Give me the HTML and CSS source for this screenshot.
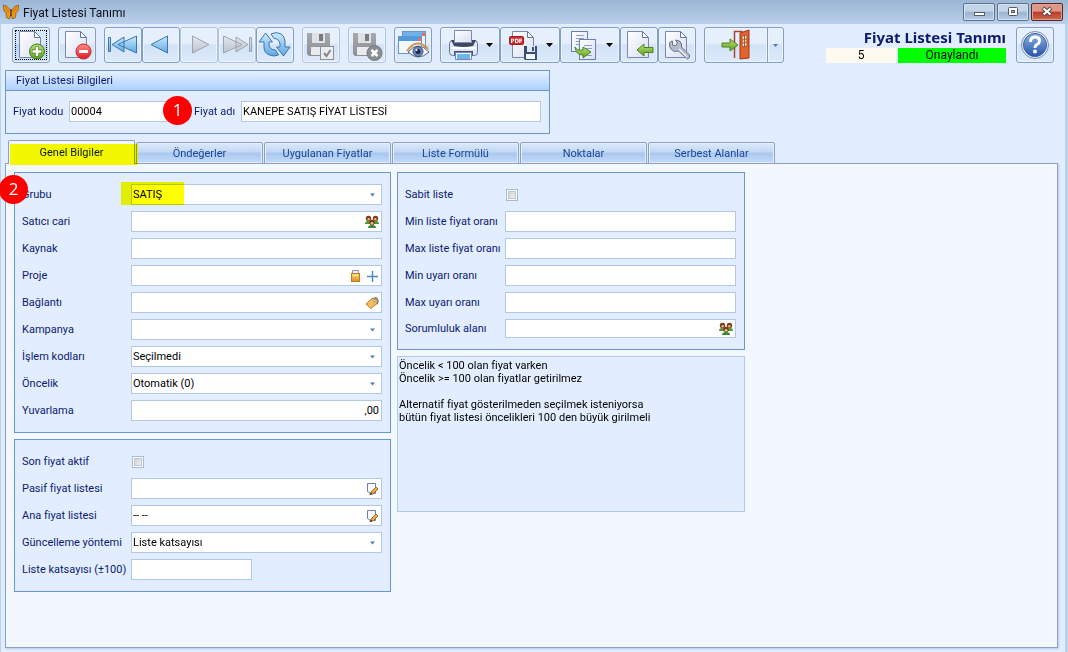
FILE: index.html
```html
<!DOCTYPE html>
<html lang="tr">
<head>
<meta charset="utf-8">
<title>Fiyat Listesi Tanımı</title>
<link rel="stylesheet" href="styles.css">
</head>
<body>
<svg class="defs" aria-hidden="true">
  <defs>
    <linearGradient id="gPage" x1="0" y1="0" x2="1" y2="1"><stop offset="0" stop-color="#fff"/><stop offset="1" stop-color="#d9dff2"/></linearGradient>
    <linearGradient id="gBlue" x1="0" y1="0" x2="0" y2="1"><stop offset="0" stop-color="#cdeafd"/><stop offset="1" stop-color="#5fa9e0"/></linearGradient>
    <linearGradient id="gGray" x1="0" y1="0" x2="0" y2="1"><stop offset="0" stop-color="#e6e9ee"/><stop offset="1" stop-color="#bcc2ca"/></linearGradient>
    <linearGradient id="gDisk" x1="0" y1="0" x2="0" y2="1"><stop offset="0" stop-color="#a6a9ad"/><stop offset="1" stop-color="#8b8f94"/></linearGradient>
    <linearGradient id="gGreen" x1="0" y1="0" x2="0" y2="1"><stop offset="0" stop-color="#b9e07a"/><stop offset="1" stop-color="#5fa01e"/></linearGradient>
    <linearGradient id="gRed" x1="0" y1="0" x2="0" y2="1"><stop offset="0" stop-color="#ff8d86"/><stop offset="1" stop-color="#dd1a22"/></linearGradient>
    <linearGradient id="gHelp" x1="0" y1="0" x2="0" y2="1"><stop offset="0" stop-color="#8db2e6"/><stop offset="1" stop-color="#2754a8"/></linearGradient>
    <linearGradient id="gGold" x1="0" y1="0" x2="0" y2="1"><stop offset="0" stop-color="#fbd679"/><stop offset="1" stop-color="#dd8f1e"/></linearGradient>
    <symbol id="people" viewBox="0 0 14 14">
      <path d="M0 9q0-3 3-3t3 3zM8 9q0-3 3-3t3 3z" fill="#4c9a3a"/>
      <circle cx="3.500" cy="3.500" r="2.700" fill="#7a3f1a"/><circle cx="10.500" cy="3.500" r="2.700" fill="#7a3f1a"/>
      <circle cx="3.700" cy="4.200" r="1.300" fill="#e9b27c"/><circle cx="10.300" cy="4.200" r="1.300" fill="#e9b27c"/>
      <path d="M3 13q0-3 4-3t4 3z" fill="#3c8a2d"/><circle cx="7" cy="7.500" r="2.700" fill="#6c3412"/><circle cx="7" cy="8.300" r="1.500" fill="#eab881"/>
    </symbol>
    <symbol id="lock" viewBox="0 0 14 14"><path d="M4.500 5V1.500h6V5" fill="#eef1f8" stroke="#8b94ab"/><rect x="3.500" y="4.500" width="8" height="8" fill="url(#gGold)" stroke="#c07a24"/><path d="M5 6.500h5" stroke="#fff1b0"/></symbol>
    <symbol id="plus" viewBox="0 0 14 14"><path d="M7.500 2v11M2 7.500h11" stroke="#4a86c0" stroke-width="1.400"/></symbol>
    <symbol id="tag" viewBox="0 0 14 14"><path d="M1 8l6-5.500 4-.5 1.500 2.500-.7 3L6 12.500z" fill="#f5bf5e" stroke="#b8752a"/><circle cx="9.700" cy="4.700" r="1.200" fill="#fff" stroke="#555" stroke-width=".6"/><path d="M9.500 2q3-1 3.500 2t-1 4.500" fill="none" stroke="#666"/></symbol>
    <symbol id="edit" viewBox="0 0 14 14"><path d="M2.500 1.500h8v10h-5l-3-2z" fill="#f8faff" stroke="#6d7fa8"/><path d="M5 12.500l1-2.500 5-5 2 2-5 5z" fill="#f0a83c" stroke="#8c5a20" stroke-width=".8"/><path d="M4.500 13l1.500-2.500 1.500 1.500z" fill="#333"/></symbol>
    <symbol id="arrow" viewBox="0 0 7 4"><path d="M0 0h7L3.500 4z" fill="currentColor"/></symbol>
    <symbol id="page" viewBox="0 0 32 32"><path d="M4.500 2.500h15l6 6v20h-21z" fill="url(#gPage)" stroke="#7b88ac"/><path d="M19.500 2.500v6h6z" fill="#fff" stroke="#5d76aa"/></symbol>
  </defs>
</svg>

<div class="window">
  <header class="titlebar">
    <svg class="logo" width="16" height="16" viewBox="0 0 16 16" aria-hidden="true">
      <path d="M8 7Q4 1 .5 1q-.5 4 1 6.500L3.500 9 3 10l.5 3.500L6.500 15 8 10l1.500 5 3-1.500.5-3.500-.5-1 2-1.500Q16 5 15.500 1 12 1 8 7z" fill="#ec961c" stroke="#8a4e0e" stroke-width=".7"/>
      <path d="M2.500 2.500Q3 6 6 8M13.500 2.500Q13 6 10 8" fill="none" stroke="#d9780f" stroke-width="1.200"/><path d="M8 5v7" stroke="#4a2808" stroke-width="1.200"/>
    </svg>
    <h1 class="caption">Fiyat Listesi Tanımı</h1>
    <div class="window-buttons">
      <button class="winbtn" aria-label="Simge durumuna küçült"><svg width="12" height="12"><rect x="1.500" y="6.500" width="10" height="3" fill="#fff" stroke="#555b66"/></svg></button>
      <button class="winbtn" aria-label="Ekranı kapla"><svg width="12" height="12"><rect x="1.500" y="1.500" width="9" height="8" rx="1" fill="#fff" stroke="#555b66"/><rect x="4.500" y="4.500" width="3" height="2" fill="#9fb8d6" stroke="#555b66"/></svg></button>
      <button class="winbtn winbtn-close" aria-label="Kapat"><svg width="12" height="12"><path d="M2 2l8 7M10 2L2 9" stroke="#5b4650" stroke-width="4"/><path d="M2.500 2.500l7 6M9.500 2.500l-7 6" stroke="#fff" stroke-width="2"/></svg></button>
    </div>
  </header>

  <div class="toolbar">
    <div class="tools">
      <div class="group">
        <button class="tool tool-focus" aria-label="Yeni"><svg width="32" height="32"><use href="#page"/><circle cx="22" cy="22.500" r="7.500" fill="url(#gGreen)" stroke="#3f7a17"/><path d="M22 17.500v10M17 22.500h10" stroke="#4c821f" stroke-width="4"/><path d="M22 18v9M17.500 22.500h9" stroke="#fff" stroke-width="2.500"/></svg></button>
      </div>
      <div class="group">
        <button class="tool" aria-label="Sil"><svg width="32" height="32"><use href="#page"/><circle cx="22.500" cy="22.500" r="7.500" fill="url(#gRed)" stroke="#c5242a"/><path d="M18 22.500h9" stroke="#fff" stroke-width="3"/></svg></button>
      </div>
      <div class="group">
        <button class="tool" aria-label="İlk"><svg width="32" height="32"><path d="M1.500 8.500h2v14h-2zM17 8v15L5 15.500zM29.500 7v17L11 15.500z" fill="url(#gBlue)" stroke="#3a74b2"/></svg></button>
        <button class="tool" aria-label="Önceki"><svg width="32" height="32"><path d="M22.500 7v17L6 15.500z" fill="url(#gBlue)" stroke="#3a74b2"/></svg></button>
        <button class="tool tool-off" disabled aria-label="Sonraki"><svg width="32" height="32"><path d="M9.500 7v17L26 15.500z" fill="url(#gGray)" stroke="#9ba3ae"/></svg></button>
        <button class="tool tool-off" disabled aria-label="Son"><svg width="32" height="32"><path d="M28.500 8.500h2v14h-2zM15 8v15l12-7.500zM2.500 7v17L21 15.500z" fill="url(#gGray)" stroke="#9ba3ae"/></svg></button>
        <button class="tool" aria-label="Yenile"><svg width="32" height="32"><g fill="url(#gBlue)" stroke="#3a74b2" stroke-linejoin="round"><path d="M5 18v-5H0L6.500 4l7 9H10v3q1 5 6.500 5l3 5q-5 2-9 0Q5 24 5 18z"/><path d="M26 12v6h5l-6.500 9-7-9H21v-3Q20 9.500 15 9.500L12 5q5-2.500 9-.5Q25 6 26 12z"/></g></svg></button>
      </div>
      <div class="group">
        <button class="tool tool-off" disabled aria-label="Kaydet"><svg width="32" height="32"><path d="M2 4h22l1 1v22H4l-2-2z" fill="url(#gDisk)"/><path d="M7 4h13v10H7z" fill="#dfe1e4"/><path d="M14 5h4v7h-4z" fill="#777b80"/><path d="M6 18h15v8H6z" fill="#e9eaec"/><rect x="15.500" y="17.500" width="13" height="13" fill="#eceded" stroke="#8c8f94"/><path d="M19 24l2.500 3 4-6" fill="none" stroke="#85898e" stroke-width="2"/></svg></button>
      </div>
      <div class="group">
        <button class="tool tool-off" disabled aria-label="Kaydı iptal et"><svg width="32" height="32"><path d="M2 4h22l1 1v22H4l-2-2z" fill="url(#gDisk)"/><path d="M7 4h13v10H7z" fill="#dfe1e4"/><path d="M14 5h4v7h-4z" fill="#777b80"/><path d="M6 18h15v8H6z" fill="#e9eaec"/><circle cx="23.500" cy="24" r="7.500" fill="#8b8f94" stroke="#74787d"/><path d="M20.500 21l6 6M26.500 21l-6 6" stroke="#fff" stroke-width="2.500"/></svg></button>
      </div>
      <div class="group">
        <button class="tool" aria-label="Önizleme"><svg width="32" height="32"><rect x="5.500" y="2.500" width="23" height="16" fill="#eef4fc" stroke="#6a95c8"/><path d="M6 3h22v4H6z" fill="#6fb2e8"/><path d="M25 4h3v3h-3z" fill="#ef6a55"/><rect x="1.500" y="7.500" width="23" height="17" fill="#f4f8fe" stroke="#6a95c8"/><path d="M2 8h22v4H2z" fill="#4e9ce0"/><path d="M21 9h3v3h-3z" fill="#ef6a55"/><path d="M11 23q10-12 21 0-11 10-21 0z" fill="#f4f6fa" stroke="#566787"/><path d="M10 22q10-14 21-2" fill="none" stroke="#d39549" stroke-width="2"/><circle cx="21" cy="22.500" r="5" fill="#6c86b4" stroke="#3a4d79"/><circle cx="21" cy="22.500" r="2.500" fill="#1b2747"/><circle cx="19.500" cy="21" r="1" fill="#fff"/></svg></button>
      </div>
      <div class="group">
        <button class="tool tool-drop" aria-label="Yazdır"><svg width="32" height="32"><rect x="1.500" y="11.500" width="28" height="15" rx="3" fill="#dfe6f5" stroke="#66779f"/><path d="M6.500 1.500h17v12h-17z" fill="url(#gPage)" stroke="#7c8ab0"/><path d="M3 11h3v3h18v-3h4l-3 6q-9 2-19 0z" fill="#3d4865"/><path d="M3 19h25" stroke="#fff" stroke-width="2"/><path d="M6 22h19v4H6z" fill="#455173"/><path d="M7.500 23.500h16v7h-16z" fill="#f3f8ff" stroke="#7188b5"/><path d="M9 25h13v5H9z" fill="#70b6ee"/></svg><svg class="caret" width="7" height="4"><use href="#arrow"/></svg></button>
        <button class="tool tool-drop" aria-label="PDF olarak kaydet"><svg width="32" height="32"><use href="#page"/><rect x="1.500" y="7.500" width="14" height="8" rx="1" fill="#d32a2d" stroke="#a41c22"/><text class="pdf" x="8.500" y="14" text-anchor="middle">PDF</text><path d="M16 17h13v14H17l-1-1z" fill="#3c4d72"/><path d="M19 17h8v6h-8z" fill="#dfe7f5"/><path d="M24 18h2v4h-2z" fill="#3c4d72"/><path d="M18 25h9v5h-9z" fill="#f5f8fd"/></svg><svg class="caret" width="7" height="4"><use href="#arrow"/></svg></button>
        <button class="tool tool-drop" aria-label="Kopyala"><svg width="32" height="32"><rect x="3.500" y="2.500" width="16" height="20" fill="url(#gPage)" stroke="#6b7fae"/><path d="M8 6.500h8M8 9.500h8M8 12.500h4M8 15.500h4" stroke="#8d9fc8"/><rect x="11.500" y="10.500" width="16" height="20" fill="url(#gPage)" stroke="#6b7fae"/><path d="M16 16.500h8M16 19.500h8M19 26.500h5" stroke="#8d9fc8"/><path d="M7 18q2 4 8 3v-3l8 5-8 6v-3q-7 0-8-8z" fill="url(#gGreen)" stroke="#4c821f"/></svg><svg class="caret" width="7" height="4"><use href="#arrow"/></svg></button>
        <button class="tool" aria-label="İçe aktar"><svg width="32" height="32"><use href="#page"/><path d="M14 21l7-6v3.500h9v5h-9V27z" fill="url(#gGreen)" stroke="#4c821f"/></svg></button>
        <button class="tool" aria-label="Ayarlar"><svg width="32" height="32"><use href="#page"/><path d="M8.500 14q1-2 3-2v4l3 1 2-3-2-3q5 0 6 4v3l8 8q1 3-2 4l-9-8q-7 2-9-5z" fill="#b3bccb" stroke="#68738a" stroke-linejoin="round"/><path d="M18 20l8 8" stroke="#eef1f6" stroke-width="1.500"/></svg></button>
      </div>
      <div class="group">
        <button class="tool tool-exit" aria-label="Çıkış"><svg width="32" height="32"><path d="M14.500 29V2.500h8" fill="none" stroke="#a9443c" stroke-width="1.500"/><path d="M20 4l9-3v28l-9 1z" fill="#e2632c" stroke="#a53518"/><path d="M22 7l5-1v11l-5 1z" fill="#e8e2bd" stroke="#b74f28"/><path d="M24.500 7v10M22 11l5-1M22 14l5-1" stroke="#b74f28"/><path d="M2 14h8v-4l8 6-8 6v-4H2z" fill="url(#gGreen)" stroke="#4c821f"/></svg></button><button class="tool tool-more" aria-label="Çıkış seçenekleri"><svg class="caret-blue" width="5" height="3" viewBox="0 0 7 4"><use href="#arrow"/></svg></button>
      </div>
    </div>
    <div class="status">
      <h2 class="status-title">Fiyat Listesi Tanımı</h2>
      <div class="status-row"><span class="status-no">5</span><span class="status-ok">Onaylandı</span></div>
    </div>
    <button class="tool" aria-label="Yardım"><svg width="32" height="32"><circle cx="16" cy="16" r="13.500" fill="#e8eef8" stroke="#7b8db5"/><circle cx="16" cy="16" r="11.500" fill="url(#gHelp)" stroke="#3e5f9f"/><path d="M11.500 13q0-5 4.500-5t4.500 4q0 2-2.500 3.500-2 1-2 3.500" fill="none" stroke="#fff" stroke-width="3"/><circle cx="16" cy="22.500" r="2" fill="#fff"/></svg></button>
  </div>

  <main class="content">
    <section class="info">
      <h3 class="info-head">Fiyat Listesi Bilgileri</h3>
      <div class="info-body">
        <label class="info-label" for="kod">Fiyat kodu</label>
        <div class="field field-code"><input id="kod" type="text" value="00004"></div>
        <label class="info-label" for="ad">Fiyat adı</label>
        <div class="field field-name"><input id="ad" type="text" value="KANEPE SATIŞ FİYAT LİSTESİ"></div>
      </div>
      <span class="badge badge-one">1</span>
    </section>

    <div class="tabs" role="tablist">
      <button class="tab tab-on" role="tab" aria-selected="true">Genel Bilgiler<span class="mark mark-tab"></span></button>
      <button class="tab" role="tab">Öndeğerler</button>
      <button class="tab" role="tab">Uygulanan Fiyatlar</button>
      <button class="tab" role="tab">Liste Formülü</button>
      <button class="tab" role="tab">Noktalar</button>
      <button class="tab" role="tab">Serbest Alanlar</button>
    </div>

    <div class="panel" role="tabpanel">
      <div class="column">
        <section class="box box-left">
          <label for="grubu">Grubu</label>
          <div class="field"><select id="grubu"><option>SATIŞ</option></select><svg class="drop" width="7" height="4"><use href="#arrow"/></svg><span class="mark mark-field"></span></div>
          <label for="satici">Satıcı cari</label>
          <div class="field"><input id="satici" type="text"><button class="pick" aria-label="Cari seç"><svg width="14" height="14"><use href="#people"/></svg></button></div>
          <label for="kaynak">Kaynak</label>
          <div class="field"><input id="kaynak" type="text"></div>
          <label for="proje">Proje</label>
          <div class="field"><input id="proje" type="text"><button class="pick" aria-label="Kilitle"><svg width="14" height="14"><use href="#lock"/></svg></button><button class="pick" aria-label="Ekle"><svg width="14" height="14"><use href="#plus"/></svg></button></div>
          <label for="baglanti">Bağlantı</label>
          <div class="field"><input id="baglanti" type="text"><button class="pick" aria-label="Bağlantı seç"><svg width="14" height="14"><use href="#tag"/></svg></button></div>
          <label for="kampanya">Kampanya</label>
          <div class="field"><select id="kampanya"><option></option></select><svg class="drop" width="7" height="4"><use href="#arrow"/></svg></div>
          <label for="islem">İşlem kodları</label>
          <div class="field"><select id="islem"><option>Seçilmedi</option></select><svg class="drop" width="7" height="4"><use href="#arrow"/></svg></div>
          <label for="oncelik">Öncelik</label>
          <div class="field"><select id="oncelik"><option>Otomatik (0)</option></select><svg class="drop" width="7" height="4"><use href="#arrow"/></svg></div>
          <label for="yuvarlama">Yuvarlama</label>
          <div class="field"><input id="yuvarlama" class="number" type="text" value=",00"></div>
          <span class="badge badge-two">2</span>
        </section>
        <section class="box box-left">
          <label for="son">Son fiyat aktif</label>
          <input id="son" class="check" type="checkbox">
          <label for="pasif">Pasif fiyat listesi</label>
          <div class="field"><input id="pasif" type="text"><button class="pick" aria-label="Düzenle"><svg width="14" height="14"><use href="#edit"/></svg></button></div>
          <label for="ana">Ana fiyat listesi</label>
          <div class="field"><input id="ana" type="text" value="-- --"><button class="pick" aria-label="Düzenle"><svg width="14" height="14"><use href="#edit"/></svg></button></div>
          <label for="yontem">Güncelleme yöntemi</label>
          <div class="field"><select id="yontem"><option>Liste katsayısı</option></select><svg class="drop" width="7" height="4"><use href="#arrow"/></svg></div>
          <label for="katsayi">Liste katsayısı (±100)</label>
          <div class="field field-short"><input id="katsayi" type="text"></div>
        </section>
      </div>
      <div class="column">
        <section class="box box-right">
          <label for="sabit">Sabit liste</label>
          <input id="sabit" class="check" type="checkbox">
          <label for="minl">Min liste fiyat oranı</label>
          <div class="field"><input id="minl" type="text"></div>
          <label for="maxl">Max liste fiyat oranı</label>
          <div class="field"><input id="maxl" type="text"></div>
          <label for="minu">Min uyarı oranı</label>
          <div class="field"><input id="minu" type="text"></div>
          <label for="maxu">Max uyarı oranı</label>
          <div class="field"><input id="maxu" type="text"></div>
          <label for="sorumluluk">Sorumluluk alanı</label>
          <div class="field field-low"><input id="sorumluluk" type="text"><button class="pick" aria-label="Sorumlu seç"><svg width="14" height="14"><use href="#people"/></svg></button></div>
        </section>
        <textarea class="note" aria-label="Öncelik açıklaması" readonly>Öncelik &lt; 100 olan fiyat varken
Öncelik &gt;= 100 olan fiyatlar getirilmez

Alternatif fiyat gösterilmeden seçilmek isteniyorsa
bütün fiyat listesi öncelikleri 100 den büyük girilmeli</textarea>
      </div>
    </div>
  </main>
</div>
</body>
</html>
```
FILE: styles.css
```css
* { box-sizing: border-box; }

body {
  margin: 0;
  font: 11px/13px Roboto, "Liberation Sans", sans-serif;
  color: #0c1a72;
}

h1, h2, h3 { margin: 0; font: inherit; }

button, input, select, textarea {
  font: inherit;
  color: #000;
  margin: 0;
  padding: 0;
  border: 0;
  background: none;
}

.defs { position: absolute; width: 0; height: 0; }

.window {
  display: flex;
  flex-direction: column;
  min-height: 100vh;
  background: #e2eeff;
  border-left: 1px solid #b9d1ea;
  border-right: 3px solid #b9d1ea;
}

/* Title bar */
.titlebar {
  display: flex;
  align-items: center;
  height: 24px;
  margin: 0 -3px 0 -1px;
  padding: 0 5px 0 3px;
  gap: 4px;
  background: linear-gradient(#9bb5d3, #b9d0ea);
}
.caption { flex: 1; font: 12px/16px Roboto, sans-serif; color: #0a0f18; padding-top: 2px; }
.window-buttons { display: flex; gap: 2px; }
.winbtn {
  display: flex;
  align-items: center;
  justify-content: center;
  width: 32px;
  height: 18px;
  border: 1px solid #5c738f;
  border-radius: 2px;
  box-shadow: inset 0 0 0 1px #d3e1f1;
  background: linear-gradient(#c4d5e9 45%, #9ab3d0 50%, #b7cce4);
}
.winbtn-close {
  border-color: #5e2222;
  box-shadow: inset 0 0 0 1px #dba193;
  background: linear-gradient(#dd9787 45%, #b93a26 50%, #cc6a50);
}

/* Toolbar */
.toolbar { display: flex; padding: 3px 11px 0 11px; gap: 10px; }
.tools { display: flex; flex: 1; gap: 8px; }
.group { display: flex; }
.tool {
  display: flex;
  align-items: center;
  justify-content: center;
  width: 38px;
  height: 36px;
  border: 1px solid #7f9ec9;
  border-radius: 3px;
  box-shadow: inset 0 0 0 1px #edf4fe;
  background: linear-gradient(#e6f0fd 45%, #d3e2f6 50%, #dceafb);
}
.tool-focus {
  outline: 1px dotted #000;
  outline-offset: -4px;
  background: linear-gradient(#d5e8fb 45%, #b5d5f4 50%, #c9e2fb);
}
.tool-off { border-color: #afc4e0; }
.tool-drop { width: 60px; gap: 6px; }
.caret { color: #000; }
.caret-blue { color: #4a78b8; }
.tool-exit { width: 64px; border-radius: 3px 0 0 3px; }
.tool-more { width: 17px; margin-left: -1px; border-radius: 0 3px 3px 0; }
.pdf { font: bold 6px "DejaVu Sans Condensed", sans-serif; fill: #fff; }

.status { display: flex; flex-direction: column; width: 180px; }
.status-title {
  font: bold 15px/21px "Noto Sans", sans-serif;
  text-align: right;
  white-space: nowrap;
}
.status-row { display: flex; gap: 2px; color: #000; text-align: center; font-size: 12px; line-height: 15px; }
.status-no { flex: 0 0 70px; background: #fffaf0; }
.status-ok { flex: 1; background: #0f0; }

/* Content */
.content { display: flex; flex: 1; flex-direction: column; padding: 7px 7px 4px 4px; }

.info { position: relative; width: 100%; max-width: 545px; border: 1px solid #6a96d2; }
.info-head {
  height: 20px;
  padding: 3px 10px;
  border-bottom: 1px solid #6a96d2;
  background: linear-gradient(#e6f1ff, #aed1ff);
}
.info-body { display: grid; grid-template-columns: 56px 109px 16px 47px 1fr; align-items: center; padding: 10px 8px 11px 7px; }
.info-label { white-space: nowrap; }
.field-name { grid-column: 5; }
.info-label[for="ad"] { grid-column: 4; }

.field {
  position: relative;
  display: flex;
  align-items: center;
  height: 21px;
  padding: 0 2px 0 1px;
  border: 1px solid #b3c8e4;
  background: #fff;
}
.field input, .field select { flex: 1; min-width: 0; height: 100%; appearance: none; outline: 0; }
.field .number { text-align: right; }
.field-short { width: 121px; }
.field-low { height: 19px; }
.drop { position: absolute; right: 6px; top: 8px; color: #4f7db6; pointer-events: none; width: 5px; }
.pick { display: flex; margin-left: 3px; }

/* Tabs */
.tabs { display: flex; align-items: flex-end; margin: 6px 0 -1px 3px; }
.tab {
  width: 127px;
  height: 22px;
  margin-left: 1px;
  border: 1px solid #8b9fca;
  border-radius: 2px 2px 0 0;
  box-shadow: inset 0 0 0 1px #e6effb;
  background: linear-gradient(#dce9fa, #c3d8f3 45%, #a9c8f0 50%, #c4dbf8);
  color: #1b4494;
}
.tab-on {
  position: relative;
  height: 24px;
  margin-left: 0;
  border-bottom: 0;
  box-shadow: none;
  background: #f3f8ff;
  color: #0c1a72;
}

.panel {
  display: flex;
  flex: 1;
  align-items: flex-start;
  gap: 6px;
  padding: 8px;
  border: 1px solid #8b9fca;
  background: #f3f8ff;
  box-shadow: 1px 1px 2px #b9cbe4;
}
.column { display: flex; flex-direction: column; gap: 6px; flex: 0 1 377px; }
.column + .column { flex-basis: 348px; }
.box {
  position: relative;
  display: grid;
  gap: 6px 0;
  align-items: center;
  padding: 11px 8px 11px 7px;
  border: 1px solid #6a96d2;
  background: #e2eeff;
  white-space: nowrap;
}
.box-left { grid-template-columns: 109px 1fr; }
.box-right { grid-template-columns: 100px 1fr; }

.check {
  appearance: none;
  width: 12px;
  height: 12px;
  margin: 5px 1px 4px;
  border: 1px solid #a3badb;
  box-shadow: inset 0 0 0 1px #fff, inset 0 0 0 2px #bfc4cd;
  background: linear-gradient(135deg, #c4c9d1, #fafbfc);
}

.note {
  display: block;
  width: 100%;
  height: 156px;
  padding: 2px 1px;
  border: 1px solid #b3c8e4;
  background: #e2eeff;
  resize: none;
  outline: 0;
}

/* Callouts and highlighter marks */
.badge {
  position: absolute;
  width: 29px;
  height: 29px;
  border-radius: 50%;
  background: #f00;
  color: #fff;
  font: 17px/28px "Open Sans", sans-serif;
  text-align: center;
}
.badge-one { left: 157px; top: 25px; }
.badge-two { left: -16px; top: 2px; }
.mark { position: absolute; background: #ff0; mix-blend-mode: multiply; pointer-events: none; }
.mark-tab { left: 1px; top: 3px; width: 128px; height: 21px; }
.mark-field { left: -11px; top: -3px; width: 63px; height: 23px; }
```
